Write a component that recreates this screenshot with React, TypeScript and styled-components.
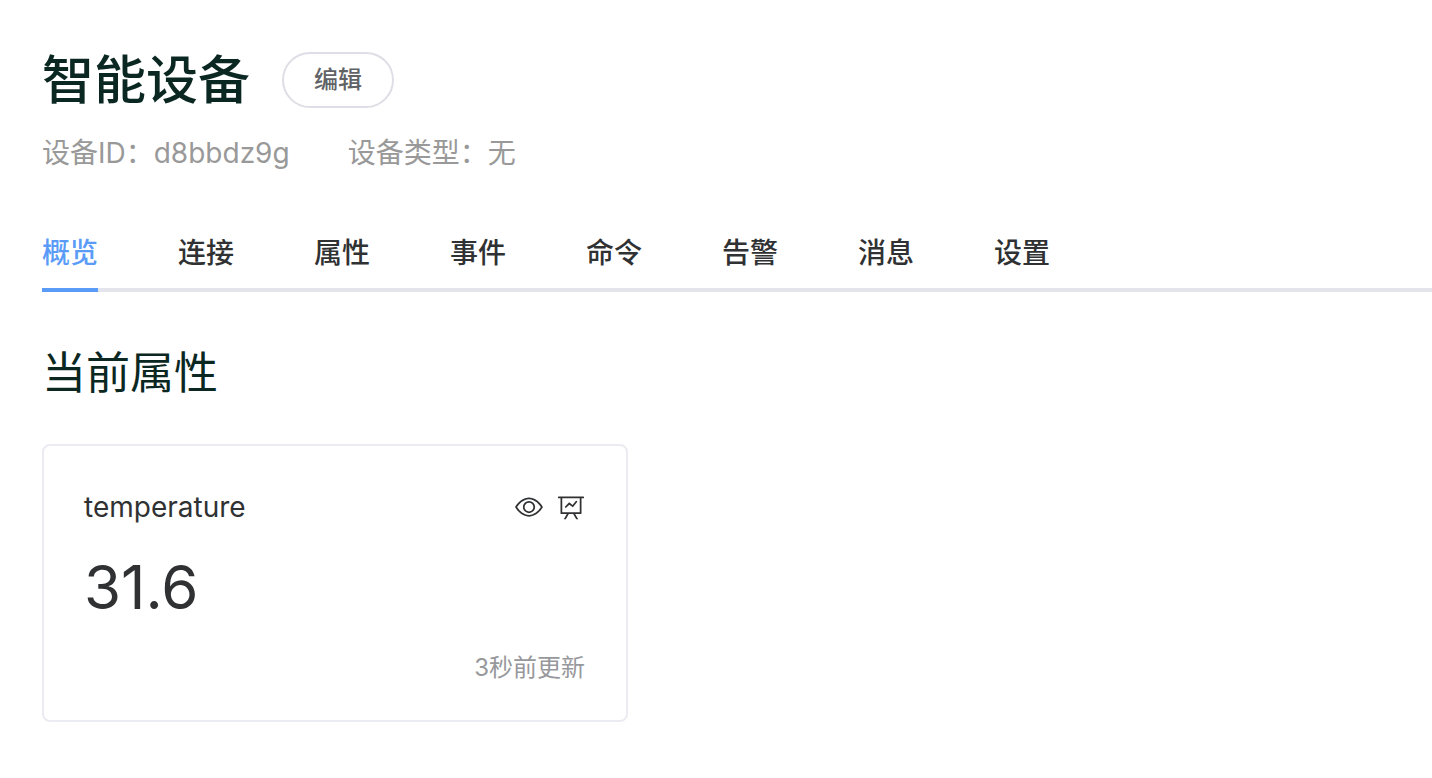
import React from "react";
import styled, { createGlobalStyle } from "styled-components";

const GlobalStyle = createGlobalStyle`
  * { box-sizing: border-box; }
  body {
    margin: 0;
    background: #fff;
    color: #303133;
    font-family: Inter, "Noto Sans CJK SC", sans-serif;
  }
`;

const Page = styled.main`
  padding: 51px 0 56px 42px;
`;

const TitleRow = styled.div`
  display: flex;
  align-items: center;
  gap: 32px;
`;

const Title = styled.h1`
  margin: 0;
  padding-top: 2px;
  font-size: 52px;
  line-height: 56px;
  font-weight: 500;
  color: #0b2722;
`;

const EditButton = styled.button`
  height: 56px;
  padding: 0 30px;
  border: 2px solid #dedee6;
  border-radius: 28px;
  background: #fff;
  color: #606266;
  font-family: inherit;
  font-size: 24px;
  line-height: 24px;
  font-weight: 500;
  cursor: pointer;
`;

const MetaRow = styled.div`
  display: flex;
  gap: 58px;
  margin-top: 24px;
  font-size: 28px;
  line-height: 40px;
  color: #999;
`;

const Meta = styled.span``;

const Tabs = styled.nav`
  display: flex;
  gap: 80px;
  margin-top: 39px;
  box-shadow: inset 0 -4px #e4e5ec;
`;

const Tab = styled.a<{ $active?: boolean }>`
  height: 80px;
  border-bottom: 4px solid ${(p) => (p.$active ? "#5b9bf8" : "transparent")};
  color: ${(p) => (p.$active ? "#5b9bf8" : "#303133")};
  font-size: 28px;
  line-height: 82px;
  font-weight: 500;
  text-decoration: none;
`;

const SectionTitle = styled.h2`
  margin: 49px 0 39px;
  font-size: 44px;
  line-height: 64px;
  font-weight: 400;
  color: #0b2722;
`;

const Card = styled.article`
  width: 100%;
  max-width: 586px;
  padding: 41px 41px 35px 40px;
  border: 2px solid #ebebf2;
  border-radius: 8px;
`;

const CardHeader = styled.header`
  display: flex;
  align-items: center;
  justify-content: space-between;
`;

const CardName = styled.h3`
  margin: 0;
  font-size: 28px;
  line-height: 40px;
  font-weight: 400;
`;

const Actions = styled.div`
  display: flex;
  gap: 14px;
`;

const IconButton = styled.button`
  display: flex;
  padding: 0;
  border: 0;
  background: none;
  color: inherit;
  cursor: pointer;

  svg {
    width: 28px;
    height: 28px;
    fill: currentColor;
  }
`;

const Value = styled.p`
  margin: 20px 0 24px;
  font-size: 60px;
  line-height: 80px;
`;

const Updated = styled.p`
  margin: 0;
  font-size: 24px;
  line-height: 34px;
  text-align: right;
  color: #97989c;
`;

const tabs = ["概览", "连接", "属性", "事件", "命令", "告警", "消息", "设置"];

const ViewIcon = () => (
  <svg viewBox="0 0 1024 1024" aria-hidden="true">
    <path d="M512 160c320 0 512 352 512 352S832 864 512 864 0 512 0 512s192-352 512-352m0 64c-225.28 0-384.128 208.064-436.8 288 52.608 79.872 211.456 288 436.8 288 225.28 0 384.128-208.064 436.8-288-52.608-79.872-211.456-288-436.8-288m0 64a224 224 0 1 1 0 448 224 224 0 0 1 0-448m0 64a160.192 160.192 0 0 0-160 160c0 88.192 71.744 160 160 160s160-71.808 160-160-71.744-160-160-160" />
  </svg>
);

const ChartIcon = () => (
  <svg viewBox="0 0 1024 1024" aria-hidden="true">
    <path d="M359.168 768H160a32 32 0 0 1-32-32V192H64a32 32 0 0 1 0-64h896a32 32 0 1 1 0 64h-64v544a32 32 0 0 1-32 32H665.216l110.848 192h-73.856L591.36 768H433.024L322.176 960H248.32zM832 192H192v512h640zM342.656 534.656a32 32 0 1 1-45.312-45.312L444.992 341.76l125.44 94.08L679.04 300.032a32 32 0 1 1 49.92 39.936L581.632 524.224 451.008 426.24z" />
  </svg>
);

export default function App() {
  return (
    <>
      <GlobalStyle />
      <Page>
        <TitleRow>
          <Title>智能设备</Title>
          <EditButton type="button">编辑</EditButton>
        </TitleRow>
        <MetaRow>
          <Meta>设备ID：d8bbdz9g</Meta>
          <Meta>设备类型：无</Meta>
        </MetaRow>
        <Tabs>
          {tabs.map((name, i) => (
            <Tab
              key={name}
              href="#"
              $active={i === 0}
              aria-current={i === 0 ? "page" : undefined}
            >
              {name}
            </Tab>
          ))}
        </Tabs>
        <section>
          <SectionTitle>当前属性</SectionTitle>
          <Card>
            <CardHeader>
              <CardName>temperature</CardName>
              <Actions>
                <IconButton type="button" aria-label="查看">
                  <ViewIcon />
                </IconButton>
                <IconButton type="button" aria-label="图表">
                  <ChartIcon />
                </IconButton>
              </Actions>
            </CardHeader>
            <Value>31.6</Value>
            <Updated>3秒前更新</Updated>
          </Card>
        </section>
      </Page>
    </>
  );
}
